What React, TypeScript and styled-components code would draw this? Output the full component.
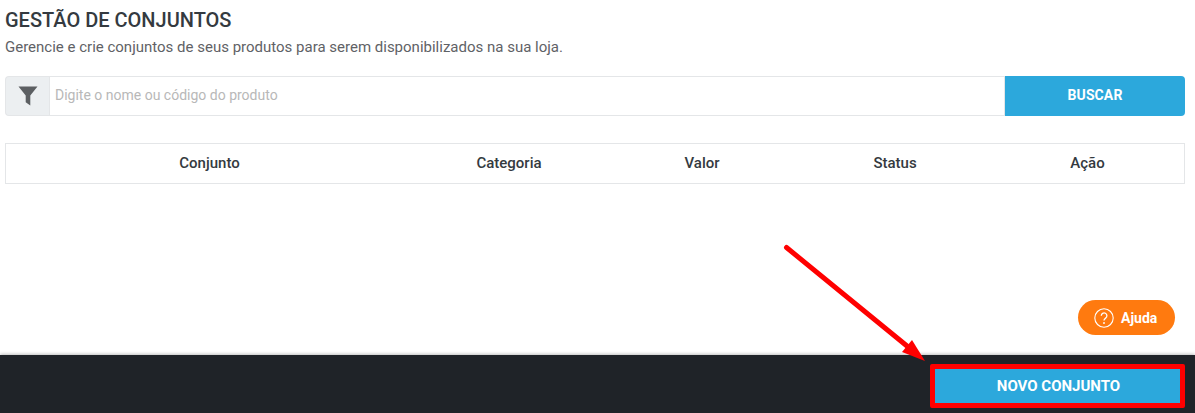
import React, { FC } from "react";
import styled, { createGlobalStyle } from "styled-components";

const GlobalStyle = createGlobalStyle`
  html, body {
    margin: 0;
    padding: 0;
    background: #fff;
  }
  body {
    font-family: Roboto, "Liberation Sans", sans-serif;
    color: #343a40;
  }
`;

const columns = ["Conjunto", "Categoria", "Valor", "Status", "Ação"];

const App: FC = () => {
  return (
    <Page>
      <GlobalStyle />
      <Content>
        <Title>GESTÃO DE CONJUNTOS</Title>
        <Subtitle>
          Gerencie e crie conjuntos de seus produtos para serem disponibilizados
          na sua loja.
        </Subtitle>
        <SearchBar>
          <FilterAddon>
            <svg width="20" height="20" viewBox="0 0 20 20">
              <path d="M0.5 0.5h19L12.3 9.4V19.5L7.7 16.2V9.4Z" fill="#5c5f62" />
            </svg>
          </FilterAddon>
          <SearchInput placeholder="Digite o nome ou código do produto" />
          <SearchButton>BUSCAR</SearchButton>
        </SearchBar>
        <TableHead>
          {columns.map((name) => (
            <HeadCell key={name}>{name}</HeadCell>
          ))}
        </TableHead>
      </Content>
      <HelpButton>
        <svg width="20" height="20" viewBox="0 0 20 20" fill="none">
          <circle cx="10" cy="10" r="9.2" stroke="#fff" strokeWidth="1.1" />
          <path
            d="M7.3 7.8a2.8 2.8 0 1 1 4.3 2.3c-1 .7-1.6 1.2-1.6 2.4"
            stroke="#fff"
            strokeWidth="1.3"
          />
          <circle cx="10" cy="15" r="0.95" fill="#fff" />
        </svg>
        Ajuda
      </HelpButton>
      <Footer>
        <NewButton>NOVO CONJUNTO</NewButton>
      </Footer>
      <Arrow width="160" height="130" viewBox="0 0 160 130">
        <path d="M6.5 6.5L127 105" stroke="#f00" strokeWidth="5" strokeLinecap="round" />
        <path d="M145 120L122 111L132 99Z" fill="#f00" />
      </Arrow>
    </Page>
  );
};

const Page = styled.div`
  position: relative;
  display: flex;
  flex-direction: column;
  width: 1195px;
  height: 413px;
  overflow: hidden;
  background: #fff;
`;

const Content = styled.div`
  flex: 1;
  padding: 9px 10px 0 5px;
`;

const Title = styled.h1`
  margin: 0;
  font-size: 20px;
  font-weight: 500;
  line-height: 22px;
  color: #343a40;
`;

const Subtitle = styled.p`
  margin: 6px 0 0;
  font-size: 15px;
  line-height: 20px;
  color: #5f6266;
`;

const SearchBar = styled.div`
  display: flex;
  height: 40px;
  margin-top: 19px;
`;

const FilterAddon = styled.div`
  display: flex;
  align-items: center;
  justify-content: center;
  box-sizing: border-box;
  width: 44px;
  padding-left: 1px;
  background: #eceff1;
  border: 1px solid #e4e6e8;
  border-right: none;
  border-radius: 4px 0 0 4px;
`;

const SearchInput = styled.input`
  flex: 1;
  min-width: 0;
  box-sizing: border-box;
  height: 40px;
  padding: 0 5px 2px;
  border: 1px solid #e4e6e8;
  outline: none;
  font-family: inherit;
  font-size: 14px;
  &::placeholder {
    color: #b8b8b8;
    opacity: 1;
  }
`;

const SearchButton = styled.button`
  width: 180px;
  padding: 0 0 2px;
  border: none;
  border-radius: 0 4px 4px 0;
  background: #2ca8dc;
  color: #fff;
  font-family: inherit;
  font-size: 14px;
  font-weight: 700;
  letter-spacing: 0.1px;
`;

const TableHead = styled.div`
  display: grid;
  grid-template-columns: 407px 192px 194px 192px 1fr;
  align-items: center;
  box-sizing: border-box;
  height: 41px;
  margin-top: 27px;
  padding-bottom: 2px;
  border: 1px solid #e4e6e8;
`;

const HeadCell = styled.div`
  text-align: center;
  font-size: 15px;
  font-weight: 500;
  color: #343a40;
`;

const HelpButton = styled.button`
  position: absolute;
  left: 1078px;
  top: 300px;
  display: flex;
  align-items: center;
  gap: 7px;
  box-sizing: border-box;
  width: 97px;
  height: 35px;
  padding: 0 0 0 16px;
  border: none;
  border-radius: 18px;
  background: #ff7a0f;
  color: #fff;
  font-family: inherit;
  font-size: 14px;
  font-weight: 700;
`;

const Footer = styled.div`
  display: flex;
  justify-content: flex-end;
  align-items: flex-start;
  box-sizing: border-box;
  height: 58px;
  padding: 9px 10px 0 0;
  background: #1f2328;
  box-shadow: 0 -1px 3px rgba(0, 0, 0, 0.25);
`;

const NewButton = styled.button`
  box-sizing: border-box;
  width: 255px;
  height: 44px;
  padding: 0 0 0 2px;
  border: 5px solid #f00;
  border-radius: 2px;
  background: #2ca8dc;
  color: #fff;
  font-family: inherit;
  font-size: 15px;
  font-weight: 700;
`;

const Arrow = styled.svg`
  position: absolute;
  left: 780px;
  top: 241px;
`;

export default App;
